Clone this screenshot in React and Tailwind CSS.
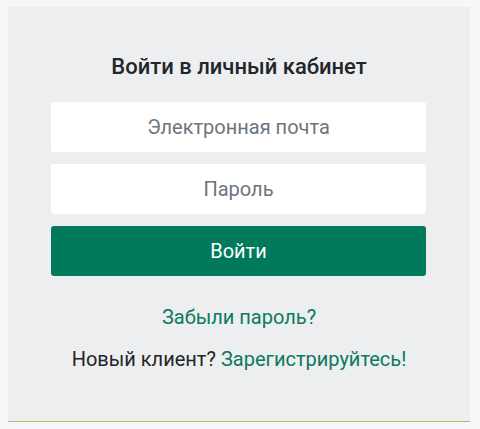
export default function App() {
  return (
    <div className="min-h-[429px] w-[480px] bg-[#f6f7f9] pt-[7px] px-[8px]" style={{ fontFamily: "Roboto, 'Noto Sans', sans-serif" }}>
      <div className="w-[462px] h-[415px] bg-[#edeef0] border-b border-[#c9ad6a] flex flex-col items-center pt-[45px]">
        <h1 className="text-[22px] leading-[30px] font-medium text-[#222529]">Войти в личный кабинет</h1>
        <div className="mt-[20px] w-[375px] self-start ml-[43px] flex flex-col gap-[12px]">
          <input
            className="h-[50px] w-full bg-white rounded-[3px] text-center text-[20px] text-[#495057] placeholder:text-[#6c757d] outline-none"
            placeholder="Электронная почта"
          />
          <input
            type="password"
            className="h-[50px] w-full bg-white rounded-[3px] text-center text-[20px] text-[#495057] placeholder:text-[#6c757d] outline-none"
            placeholder="Пароль"
          />
          <button className="h-[50px] w-full bg-[#007a5a] rounded-[3px] text-white text-[20px]">Войти</button>
        </div>
        <a className="mt-[26px] text-[20px] leading-[30px] text-[#0b7a5f]">Забыли пароль?</a>
        <p className="mt-[12px] text-[20px] leading-[30px] text-[#222529]">
          Новый клиент? <a className="text-[#0b7a5f]">Зарегистрируйтесь!</a>
        </p>
      </div>
    </div>
  );
}
